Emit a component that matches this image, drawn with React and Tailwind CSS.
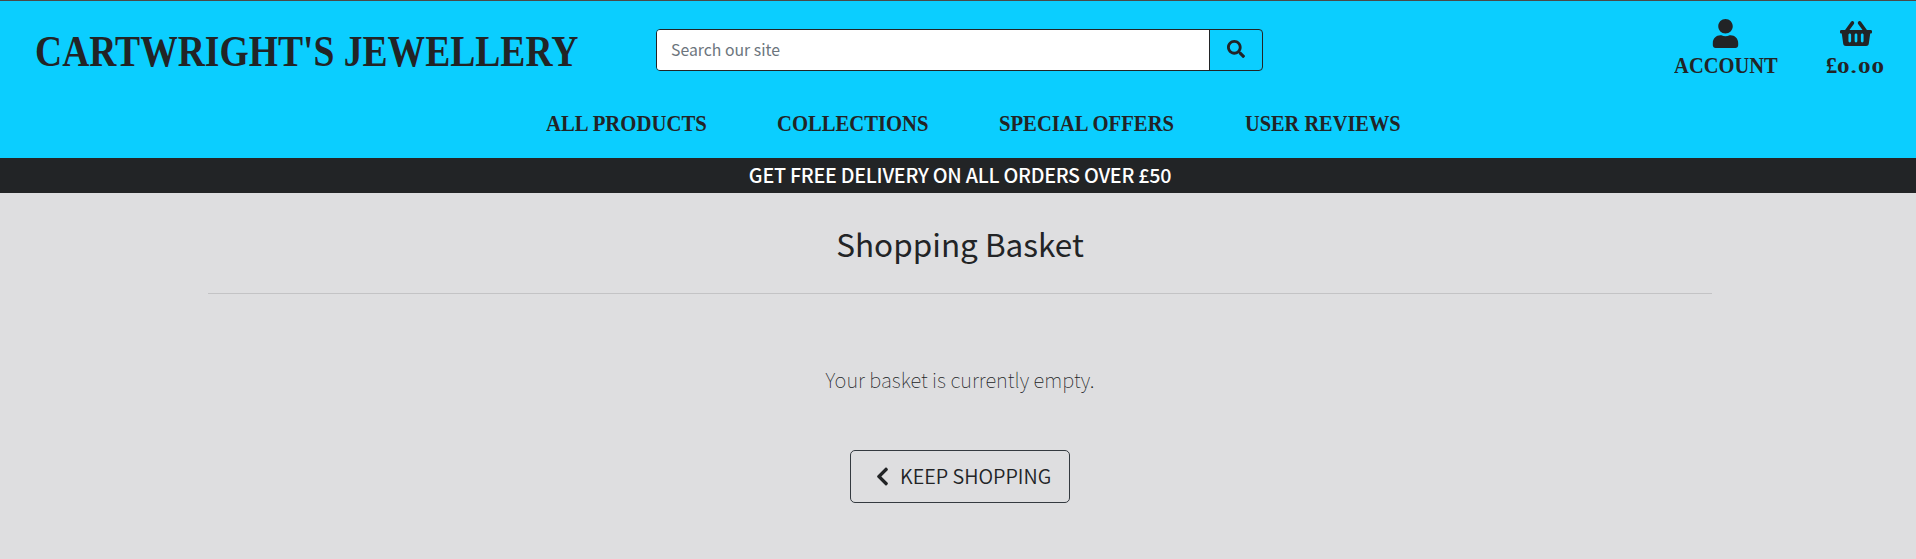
import { FaUser, FaShoppingBasket, FaSearch, FaChevronLeft } from "react-icons/fa";

const serif = "font-['Liberation_Serif',serif] font-bold";

const links = [
  { label: "ALL PRODUCTS", width: "w-[160px]", scale: "scale-x-[0.922]" },
  { label: "COLLECTIONS", width: "w-[151px]", scale: "scale-x-[0.918]" },
  { label: "SPECIAL OFFERS", width: "w-[175px]", scale: "scale-x-[0.918]" },
  { label: "USER REVIEWS", width: "w-[156px]", scale: "scale-x-[0.905]" },
];

function Header() {
  return (
    <header className="h-[158px] border-t border-[#4a4a4a] bg-[#0bceff]">
      <div className="flex h-[92px] items-start">
        <h1 className={`${serif} mt-[23px] ml-[35px] w-[621px] text-[44px] leading-[56px]`}>
          <a href="#" className="inline-block origin-left scale-x-[0.854] whitespace-nowrap">
            CARTWRIGHT'S JEWELLERY
          </a>
        </h1>
        <form className="mt-7 flex h-[42px] w-[607px] rounded border border-[#222426]">
          <input
            type="text"
            placeholder="Search our site"
            className="min-w-0 flex-1 rounded-l-[3px] bg-white px-[14px] text-[15.8px] outline-none placeholder:text-[#6c757d]"
          />
          <button type="button" className="flex w-[53px] items-center justify-center border-l border-[#222426]">
            <FaSearch className="mb-[2px] size-[18px]" />
          </button>
        </form>
        <div className={`${serif} ml-[411px] flex text-[22.5px] leading-7`}>
          <a href="#" className="flex w-[103px] flex-col items-center">
            <FaUser className="mt-[18px] size-[29px]" />
            <span className="mt-[4px] inline-block scale-x-[0.91]">ACCOUNT</span>
          </a>
          <a href="#" className="ml-[48px] flex w-[62px] flex-col items-center">
            <FaShoppingBasket className="mt-[18px] h-[29px] w-[32px]" />
            <span className="mt-[4px] flex w-[60px] items-baseline">
              £<span className="inline-block origin-left scale-x-[1.52] text-[16.5px] tracking-[0.7px]">0.00</span>
            </span>
          </a>
        </div>
      </div>
      <nav className={`${serif} ml-[546px] flex gap-[71px] pt-[17px] text-[22.5px] leading-7`}>
        {links.map((link) => (
          <a key={link.label} href="#" className={`${link.width} whitespace-nowrap`}>
            <span className={`inline-block origin-left ${link.scale}`}>{link.label}</span>
          </a>
        ))}
      </nav>
    </header>
  );
}

export default function App() {
  return (
    <div className="h-[559px] overflow-hidden bg-[#dedee0] font-['Noto_Sans_CJK_SC',sans-serif] text-[#222426]">
      <Header />
      <div className="flex h-[35px] items-center justify-center bg-[#222426] pb-[2px] pl-1 text-[19.7px] font-medium tracking-[-0.25px] text-white">
        GET FREE DELIVERY ON ALL ORDERS OVER £50
      </div>
      <main className="mr-[204px] ml-[208px] flex flex-col items-center">
        <h2 className="mt-[30px] text-[31.5px] leading-10">Shopping Basket</h2>
        <hr className="mt-[30px] w-full border-[#c3c3c5]" />
        <p className="mt-[70px] text-[20.2px] leading-8 font-thin">Your basket is currently empty.</p>
        <a
          href="#"
          className="mt-[54px] flex h-[53px] w-[220px] items-center rounded-[5px] border border-[#343a40] pb-[1px] pl-[21px] text-[19.8px] font-[350]"
        >
          <FaChevronLeft className="size-[21px]" />
          <span className="ml-[7px] whitespace-nowrap">KEEP SHOPPING</span>
        </a>
      </main>
    </div>
  );
}
